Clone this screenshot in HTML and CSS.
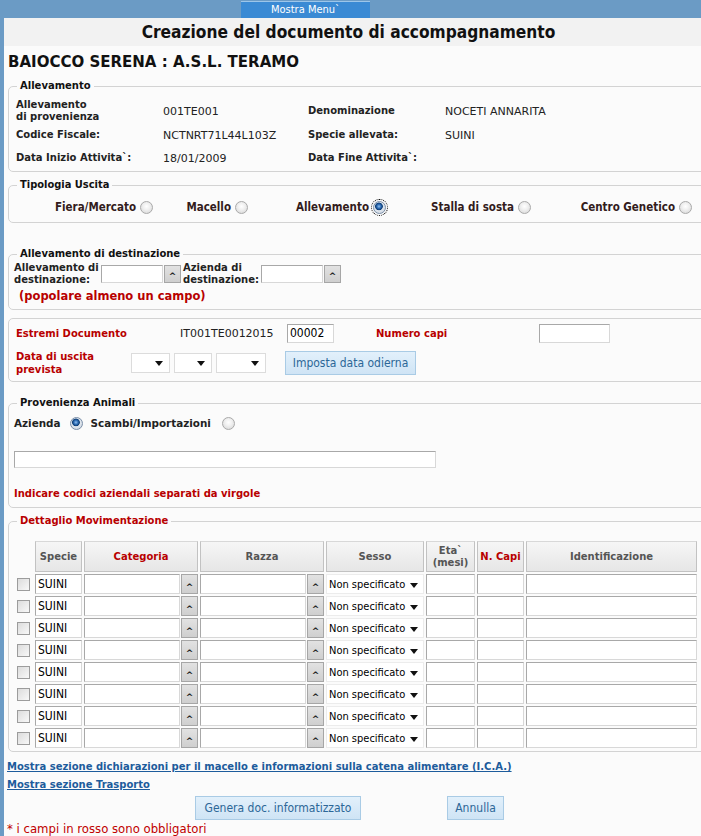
FILE: index.html
```html
<!DOCTYPE html>
<html lang="it">
<head>
<meta charset="utf-8">
<title>Creazione del documento di accompagnamento</title>
<link rel="stylesheet" href="styles.css">
</head>
<body>
<div class="topbar"><a class="menu-tab" href="#">Mostra Menu`</a></div>
<div class="page">
  <h1 class="title">Creazione del documento di accompagnamento</h1>
  <h2 class="user">BAIOCCO SERENA : A.S.L. TERAMO</h2>

  <fieldset class="fs fs-alle">
    <legend>Allevamento</legend>
    <div class="info-grid">
      <div class="lbl two">Allevamento<br>di provenienza</div><div class="val">001TE001</div><div class="lbl">Denominazione</div><div class="val">NOCETI ANNARITA</div>
      <div class="lbl">Codice Fiscale:</div><div class="val">NCTNRT71L44L103Z</div><div class="lbl">Specie allevata:</div><div class="val">SUINI</div>
      <div class="lbl">Data Inizio Attivita`:</div><div class="val">18/01/2009</div><div class="lbl">Data Fine Attivita`:</div><div class="val"></div>
    </div>
  </fieldset>

  <fieldset class="fs fs-tipo">
    <legend class="cond">Tipologia Uscita</legend>
    <div class="tipo-grid">
      <label class="opt">Fiera/Mercato <input type="radio" name="tipo"></label>
      <label class="opt">Macello <input type="radio" name="tipo"></label>
      <label class="opt">Allevamento <input type="radio" name="tipo" class="focus" checked></label>
      <label class="opt">Stalla di sosta <input type="radio" name="tipo"></label>
      <label class="opt">Centro Genetico <input type="radio" name="tipo"></label>
    </div>
  </fieldset>

  <fieldset class="fs fs-dest">
    <legend>Allevamento di destinazione</legend>
    <div class="dest-row">
      <div class="lbl dl1">Allevamento di<br>destinazione:</div>
      <input type="text" class="txt ac-in">
      <button type="button" class="ac-btn">^</button>
      <div class="lbl dl2">Azienda di<br>destinazione:</div>
      <input type="text" class="txt ac-in">
      <button type="button" class="ac-btn">^</button>
    </div>
    <div class="warn-big">(popolare almeno un campo)</div>
  </fieldset>

  <fieldset class="fs fs-doc">
    <div class="doc-row r1">
      <div class="lbl req c-lab">Estremi Documento</div>
      <div class="val c-code">IT001TE0012015</div>
      <input type="text" class="txt doc-num" value="00002">
      <div class="lbl req c-capi">Numero capi</div>
      <input type="text" class="txt capi-in">
    </div>
    <div class="doc-row r2">
      <div class="lbl req c-lab2">Data di uscita<br>prevista</div>
      <span class="sel s-d"><select><option></option></select></span>
      <span class="sel s-m"><select><option></option></select></span>
      <span class="sel s-y"><select><option></option></select></span>
      <button type="button" class="btn btn-date">Imposta data odierna</button>
    </div>
  </fieldset>

  <fieldset class="fs fs-prov">
    <legend>Provenienza Animali</legend>
    <div class="prov-row">
      <label class="lbl">Azienda</label><input type="radio" name="prov" class="r-az" checked>
      <label class="lbl">Scambi/Importazioni</label><input type="radio" name="prov" class="r-sc">
    </div>
    <input type="text" class="txt prov-in">
    <div class="warn">Indicare codici aziendali separati da virgole</div>
  </fieldset>

  <fieldset class="fs fs-det">
    <legend class="req">Dettaglio Movimentazione</legend>
    <div class="grid-table head">
      <div class="th-empty"></div>
      <div class="th">Specie</div>
      <div class="th req">Categoria</div>
      <div class="th">Razza</div>
      <div class="th">Sesso</div>
      <div class="th">Eta`<br>(mesi)</div>
      <div class="th req">N. Capi</div>
      <div class="th">Identificazione</div>
    </div>
    <div class="grid-table rows" id="rows"></div>
  </fieldset>

  <a class="link l1" href="#">Mostra sezione dichiarazioni per il macello e informazioni sulla catena alimentare (I.C.A.)</a>
  <a class="link l2" href="#">Mostra sezione Trasporto</a>
  <div class="actions">
    <button type="button" class="btn btn-gen">Genera doc. informatizzato</button>
    <button type="button" class="btn btn-ann">Annulla</button>
  </div>
  <div class="note">* i campi in rosso sono obbligatori</div>
</div>
<script>
  var html = '';
  for (var i = 0; i < 8; i++) {
    html += '<div class="td-cb"><input type="checkbox"></div>' +
      '<input type="text" class="txt cell sp" value="SUINI">' +
      '<div class="ac"><input type="text" class="txt cell"><button type="button" class="ac-btn">^</button></div>' +
      '<div class="ac"><input type="text" class="txt cell"><button type="button" class="ac-btn">^</button></div>' +
      '<span class="sel sesso"><select><option>Non specificato</option></select></span>' +
      '<input type="text" class="txt cell">' +
      '<input type="text" class="txt cell">' +
      '<input type="text" class="txt cell">';
  }
  document.getElementById('rows').innerHTML = html;
</script>
</body>
</html>
```
FILE: styles.css
```css
html, body {
  margin: 0;
  padding: 0;
  overflow: hidden;
}
body {
  background: #6b9bc5;
  font-family: "DejaVu Sans", Verdana, sans-serif;
  font-size: 10px;
  color: #222;
  width: 701px;
  height: 836px;
}
.cond, .title, .user, .menu-tab, .opt, .btn, .note, .txt, .sel select {
  font-family: "DejaVu Sans Condensed", "DejaVu Sans", sans-serif;
  font-stretch: condensed;
}
.topbar {
  height: 18px;
  padding-left: 241px;
  display: flex;
  align-items: flex-end;
}
.menu-tab {
  display: block;
  width: 129px;
  height: 16px;
  background: #3a8ad4;
  border-top: 1px solid #9cc6ea;
  color: #fff;
  font-size: 11px;
  line-height: 16px;
  text-align: center;
  text-decoration: none;
}
.page {
  margin-left: 4px;
  width: 697px;
  height: 818px;
  overflow: hidden;
  background: #fbfbfb;
}
.title {
  margin: 0;
  height: 28px;
  line-height: 28px;
  background: #f2f2f2;
  width: 697px;
  box-sizing: border-box;
  padding-right: 8px;
  text-align: center;
  font-size: 17.2px;
  font-weight: bold;
  color: #111;
}
.user {
  margin: 5px 0 0 0;
  padding-left: 4px;
  height: 20px;
  line-height: 20px;
  font-size: 16.7px;
  font-weight: bold;
  color: #111;
}
.fs {
  margin: 0 0 0 4px;
  padding: 0;
  width: 712px;
  box-sizing: border-box;
  border: 1px solid #d3d3d3;
  border-radius: 5px;
  min-width: 0;
}
.fs legend {
  margin-left: 8px;
  padding: 0 3px;
  font-weight: bold;
  font-size: 10px;
  line-height: 14px;
  color: #111;
}
.fs legend.cond { font-size: 11px; }
.lbl { font-weight: bold; color: #222; }
.req, .lbl.req, .fs legend.req { color: #b80000; }

/* Allevamento */
.fs-alle { margin-top: 8px; height: 93px; }
.info-grid {
  display: grid;
  grid-template-columns: 147px 145px 137px 200px;
  grid-template-rows: 28px 20px 26px;
  align-items: center;
  padding: 4px 0 0 7px;
}
.info-grid .lbl { line-height: 12px; }
.info-grid .val { font-size: 11px; color: #222; }

/* Tipologia */
.fs-tipo { margin-top: 6px; height: 45px; }
.tipo-grid {
  display: grid;
  grid-template-columns: 144px 95px 138px 145px 161px;
  justify-items: end;
  align-items: center;
  padding-top: 7px;
  height: 16px;
}
.opt {
  font-weight: bold;
  font-size: 11.5px;
  color: #331c1c;
  display: flex;
  align-items: center;
  gap: 4px;
  white-space: nowrap;
}

input[type=radio] {
  appearance: none;
  -webkit-appearance: none;
  margin: 0;
  width: 13px;
  height: 13px;
  border-radius: 50%;
  border: 1px solid #a9a9a9;
  box-sizing: border-box;
  background: radial-gradient(circle at 50% 40%, #ffffff 0, #f0f0f0 40%, #d3d3d3 100%);
}
input[type=radio]:checked {
  border-color: #7a8ea8;
  background: radial-gradient(circle at 45% 40%, #8fc0f0 0, #2f6db5 2px, #0d3d75 3.5px, #dfe6ee 4.2px, #c9d1da 100%);
}
input[type=radio].focus {
  outline: 1px dotted #000;
  outline-offset: 1px;
}

/* Destinazione */
.fs-dest { margin-top: 24px; height: 63px; }
.dest-row {
  display: flex;
  align-items: center;
  height: 24px;
  padding: 1px 0 0 5px;
}
.dest-row .lbl { line-height: 12px; white-space: nowrap; }
.dl1 { width: 87px; }
.dl2 { width: 78px; margin-left: 2px; }
.txt {
  box-sizing: border-box;
  margin: 0;
  border: 1px solid #a8a8a8;
  border-right-color: #d8d8d8;
  border-bottom-color: #d8d8d8;
  background: #fff;
  padding: 0 2px;
  font-size: 12px;
  color: #000;
  outline: none;
}
.ac-in { width: 62px; height: 18px; }
.ac-btn {
  box-sizing: border-box;
  width: 17px;
  height: 18px;
  margin: 0 0 0 1px;
  padding: 4px 0 0;
  border: 1px solid #a6a6a6;
  background: linear-gradient(#e2e2e2, #cfcfcf);
  font-family: "DejaVu Sans", sans-serif;
  font-weight: bold;
  font-size: 9px;
  line-height: 12px;
  color: #222;
}
.warn-big {
  margin: 3px 0 0 10px;
  font-size: 11.5px;
  line-height: 14px;
  font-weight: bold;
  color: #b80000;
}

/* Documento */
.fs-doc { margin-top: 8px; height: 64px; }
.doc-row { display: flex; align-items: center; padding-left: 7px; }
.doc-row.r1 { height: 20px; margin-top: 4px; }
.doc-row.r2 { height: 26px; margin-top: 7px; }
.c-lab { width: 164px; }
.c-code { width: 107px; font-size: 11px; color: #222; }
.doc-num { width: 47px; height: 19px; }
.c-capi { margin-left: 42px; width: 163px; }
.capi-in { width: 71px; height: 19px; }
.c-lab2 { width: 115px; line-height: 13px; }
.sel {
  position: relative;
  display: inline-block;
  box-sizing: border-box;
  height: 20px;
  border: 1px solid #dcdcdc;
  background: #fff;
}
.sel select {
  appearance: none;
  -webkit-appearance: none;
  border: 0;
  background: transparent;
  width: 100%;
  height: 100%;
  margin: 0;
  padding: 0 0 0 2px;
  font-size: 12px;
  color: #000;
  outline: none;
}
.sel::after {
  content: "";
  position: absolute;
  right: 6px;
  top: 7px;
  border-left: 4px solid transparent;
  border-right: 4px solid transparent;
  border-top: 5px solid #111;
  pointer-events: none;
}
.s-d { width: 39px; }
.s-m { width: 38px; margin-left: 4px; }
.s-y { width: 50px; margin-left: 4px; }
.btn {
  box-sizing: border-box;
  height: 24px;
  margin: 0;
  padding: 0;
  border: 1px solid #a9cbe5;
  background: linear-gradient(#e2f0fb, #cfe4f5);
  color: #2c6797;
  font-size: 12px;
}
.btn-date { width: 131px; margin-left: 19px; }

/* Provenienza */
.fs-prov { margin-top: 14px; height: 112px; }
.prov-row {
  display: flex;
  align-items: center;
  height: 14px;
  padding: 6px 0 0 5px;
}
.prov-row .lbl { font-size: 10.4px; }
.r-az { margin: 0 8px 0 9px !important; }
.r-sc { margin-left: 11px !important; }
.prov-in {
  display: block;
  width: 422px;
  height: 17px;
  margin: 21px 0 0 5px;
}
.warn {
  margin: 19px 0 0 5px;
  line-height: 14px;
  font-weight: bold;
  color: #b80000;
}

/* Dettaglio */
.fs-det { margin-top: 6px; height: 238px; }
.grid-table {
  display: grid;
  grid-template-columns: 19px 47px 114px 124px 98px 49px 47px 171px;
  column-gap: 2px;
  padding-left: 5px;
}
.grid-table.head { margin-top: 13px; }
.th {
  box-sizing: border-box;
  height: 31px;
  border: 1px solid #c2c2c2;
  border-top-color: #d8d8d8;
  background: linear-gradient(#f6f6f6, #e6e6e6);
  display: flex;
  align-items: center;
  justify-content: center;
  text-align: center;
  font-weight: bold;
  font-size: 10px;
  line-height: 12px;
  color: #555;
}
.th.req { color: #b80000; }
.rows {
  margin-top: 2px;
  row-gap: 2px;
  grid-auto-rows: 20px;
}
.td-cb { display: flex; align-items: center; justify-content: center; }
input[type=checkbox] {
  appearance: none;
  -webkit-appearance: none;
  margin: 0 0 0 -1px;
  width: 13px;
  height: 13px;
  box-sizing: border-box;
  border: 1px solid #9c9c9c;
  background: linear-gradient(135deg, #dcdcdc, #f8f8f8);
}
.cell { width: 100%; height: 20px; }
.sp { padding-left: 2px; }
.ac { display: flex; }
.ac .cell { flex: 1; width: auto; min-width: 0; }
.ac .ac-btn { height: 20px; width: 17px; padding-top: 5px; }
.sesso { width: 98px; height: 20px; border-color: #ececec; }
.sesso select { font-size: 11px; }
.sesso::after { right: 5px; top: 8px; }

/* Links and actions */
.link {
  display: block;
  margin-left: 3px;
  line-height: 14px;
  font-weight: bold;
  color: #1d5c9c;
  text-decoration: underline;
  width: max-content;
}
.l1 { margin-top: 8px; }
.l2 { margin-top: 4px; }
.actions {
  display: flex;
  gap: 86px;
  padding-left: 191px;
  margin-top: 4px;
}
.btn-gen { width: 166px; }
.btn-ann { width: 57px; }
.note {
  margin: 2px 0 0 3px;
  line-height: 14px;
  font-size: 13px;
  color: #c00000;
}
```
